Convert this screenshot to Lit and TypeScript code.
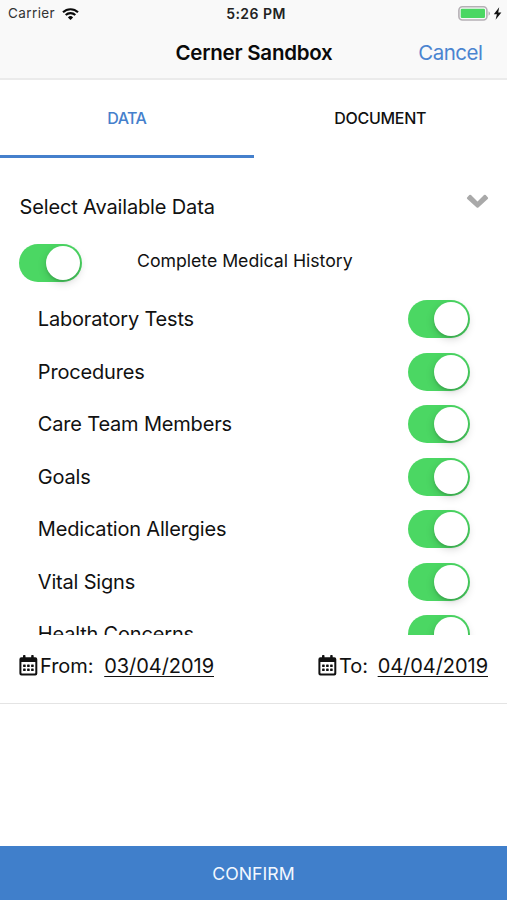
import { LitElement, html, css, svg } from "lit";
import { customElement, property, state } from "lit/decorators.js";
import { classMap } from "lit/directives/class-map.js";

@customElement("toggle-switch")
class ToggleSwitch extends LitElement {
  @property({ type: Boolean }) on = true;
  static styles = css`
    :host { display: block; flex: none; width: 62.5px; height: 38px; }
    .track { box-sizing: border-box; display: flex; height: 38px; padding: 2px; border-radius: 19px; background: #d8d8d8; }
    .track.on { background: #4bd763; justify-content: flex-end; }
    .knob { width: 34px; height: 34px; border-radius: 50%; background: #fff; box-shadow: 0 3px 9px rgba(0, 0, 0, 0.17), 0 2px 2px rgba(0, 0, 0, 0.1); }
  `;
  render() {
    return html`<div class=${classMap({ track: true, on: this.on })} @click=${() => (this.on = !this.on)}><div class="knob"></div></div>`;
  }
}

@customElement("date-field")
class DateField extends LitElement {
  @property() label = "";
  @property() value = "";
  static styles = css`
    :host { display: flex; align-items: center; height: 26px; font-size: 20px; line-height: 26px; }
    svg { display: block; flex: none; margin-right: 2px; margin-top: -2px; }
    .label { letter-spacing: -0.05px; }
    .value { margin-left: auto; text-decoration: underline; text-decoration-thickness: 1.4px; text-underline-offset: 2.5px; letter-spacing: -0.05px; }
  `;
  render() {
    const dots = [0, 1].flatMap((r) =>
      [0, 1, 2].map((c) => svg`<rect x=${4.1 + c * 4} y=${9.5 + r * 4} width="2.6" height="2.6" rx=".5" />`)
    );
    return html`
      <svg width="19" height="21" viewBox="0 0 19 21" fill="#111">
        <rect x="4" y="0" width="2.5" height="5" rx=".8" />
        <rect x="12.2" y="0" width="2.5" height="5" rx=".8" />
        <path fill-rule="evenodd" d="M2.4 2.2h13.9a2 2 0 0 1 2 2v14.2a2 2 0 0 1-2 2H2.4a2 2 0 0 1-2-2V4.2a2 2 0 0 1 2-2zM2.4 7v11.1c0 .3.2.5.5.5h12.9c.3 0 .5-.2.5-.5V7z" />
        ${dots}
      </svg>
      <span class="label">${this.label}</span>
      <span class="value">${this.value}</span>
    `;
  }
}

@customElement("app-root")
class AppRoot extends LitElement {
  @state() private tab = 0;
  private items = [
    "Laboratory Tests",
    "Procedures",
    "Care Team Members",
    "Goals",
    "Medication Allergies",
    "Vital Signs",
    "Health Concerns",
  ];
  static styles = css`
    :host { display: flex; flex-direction: column; box-sizing: border-box; height: 900px; overflow: hidden; background: #fff; color: #111; font-family: Inter, "Liberation Sans", sans-serif; white-space: nowrap; }
    header { box-sizing: border-box; height: 80px; background: #f9f9f9; border-bottom: 2px solid #ebebeb; }
    .status { display: grid; grid-template-columns: 1fr auto 1fr; align-items: center; height: 27px; padding: 0 5px 0 8px; font-size: 13.5px; line-height: 27px; }
    .carrier { display: flex; align-items: center; gap: 7px; color: #333; letter-spacing: 0.4px; }
    .time { font-weight: 600; color: #222; font-size: 14px; letter-spacing: 0.45px; padding-left: 2px; }
    .power { display: flex; align-items: center; justify-content: flex-end; gap: 2px; }
    svg { display: block; }
    .nav { display: grid; grid-template-columns: 1fr auto 1fr; align-items: center; height: 51px; padding: 0 24.5px; font-size: 20.5px; }
    .title { grid-column: 2; font-weight: 600; color: #0a0a0a; letter-spacing: -0.25px; padding-left: 1px; }
    .cancel { justify-self: end; color: #4a84d0; letter-spacing: -0.5px; }
    .tabs { display: grid; grid-template-columns: 1fr 1fr; height: 77.5px; }
    .tab { box-sizing: border-box; height: 77.5px; border-bottom: 3px solid transparent; line-height: 77px; text-align: center; font-size: 16px; font-weight: 500; letter-spacing: -0.3px; color: #111; }
    .tab.active { color: #4580cc; border-color: #4580cc; letter-spacing: -0.6px; }
    .heading { display: flex; justify-content: space-between; height: 26px; margin-top: 36px; padding: 0 18px 0 19.5px; font-size: 20px; line-height: 26px; letter-spacing: -0.14px; }
    .chevron { margin-top: -0.5px; }
    .all { display: flex; align-items: center; gap: 55.5px; height: 38px; margin: 24.5px 0 0 19px; }
    .all span { margin-top: -6px; font-size: 17.7px; letter-spacing: -0.02px; }
    .list { box-sizing: border-box; height: 353px; padding-top: 10.8px; overflow: hidden; flex: none; }
    .row { display: flex; align-items: center; justify-content: space-between; height: 52.5px; padding: 0 36.7px 0 37.8px; font-size: 20px; letter-spacing: -0.18px; }
    .dates { box-sizing: border-box; display: flex; justify-content: space-between; height: 69px; padding: 18px 19px 0 19px; border-bottom: 1px solid #e4e4e4; }
    .from { width: 195px; }
    .to { width: 170px; }
    .confirm { display: flex; align-items: center; justify-content: center; height: 54px; margin-top: auto; background: #407fcb; color: #f3f8ff; font-size: 17.7px; }
  `;
  render() {
    return html`
      <header>
        <div class="status">
          <div class="carrier"><span>Carrier</span>
            <svg width="17" height="12" viewBox="0 0 17 12" fill="none" stroke="#0a0a0a" stroke-width="2.1">
              <path d="M1 4.3a10.7 10.7 0 0 1 15 0M3.7 7.1a6.8 6.8 0 0 1 9.6 0" />
              <path d="M8.5 12 5.9 9.4a3.7 3.7 0 0 1 5.2 0z" fill="#0a0a0a" stroke="none" />
            </svg>
          </div>
          <div class="time">5:26 PM</div>
          <div class="power">
            <svg width="33" height="15" viewBox="0 0 33 15">
              <rect x=".9" y=".8" width="28" height="13.2" rx="3.5" fill="#f9f9f9" stroke="#b5b0b5" stroke-width="1.6" />
              <rect x="2.7" y="2.7" width="24.3" height="9.3" rx="1.2" fill="#4bd763" />
              <path d="M30.6 5.2c1.7.7 1.7 3.8 0 4.5z" fill="#a5a3a5" />
            </svg>
            <svg width="9" height="13" viewBox="0 0 9 13"><path d="M6.2.3.8 7.2h3.1L2.6 12.7 8.4 5.5H5.2z" fill="#111" /></svg>
          </div>
        </div>
        <div class="nav"><div class="title">Cerner Sandbox</div><div class="cancel">Cancel</div></div>
      </header>
      <nav class="tabs">
        ${["DATA", "DOCUMENT"].map((t, i) => html`<div class=${classMap({ tab: true, active: this.tab === i })} @click=${() => (this.tab = i)}>${t}</div>`)}
      </nav>
      <div class="heading"><span>Select Available Data</span>
        <svg class="chevron" width="23" height="15" viewBox="0 0 23 15"><path d="M1.3 4.2 3.3 2.1a1.2 1.2 0 0 1 1.7 0L11.5 8.4 18 2.1a1.2 1.2 0 0 1 1.7 0l2 2.1a1.2 1.2 0 0 1 0 1.7L12.4 14.4a1.2 1.2 0 0 1-1.7 0L1.3 5.9a1.2 1.2 0 0 1 0-1.7z" fill="#a9a9a9" /></svg>
      </div>
      <div class="all"><toggle-switch></toggle-switch><span>Complete Medical History</span></div>
      <div class="list">
        ${this.items.map((name) => html`<div class="row"><span>${name}</span><toggle-switch></toggle-switch></div>`)}
      </div>
      <div class="dates">
        <date-field class="from" label="From:" value="03/04/2019"></date-field>
        <date-field class="to" label="To:" value="04/04/2019"></date-field>
      </div>
      <div class="confirm"><span>CONFIRM</span></div>
    `;
  }
}
